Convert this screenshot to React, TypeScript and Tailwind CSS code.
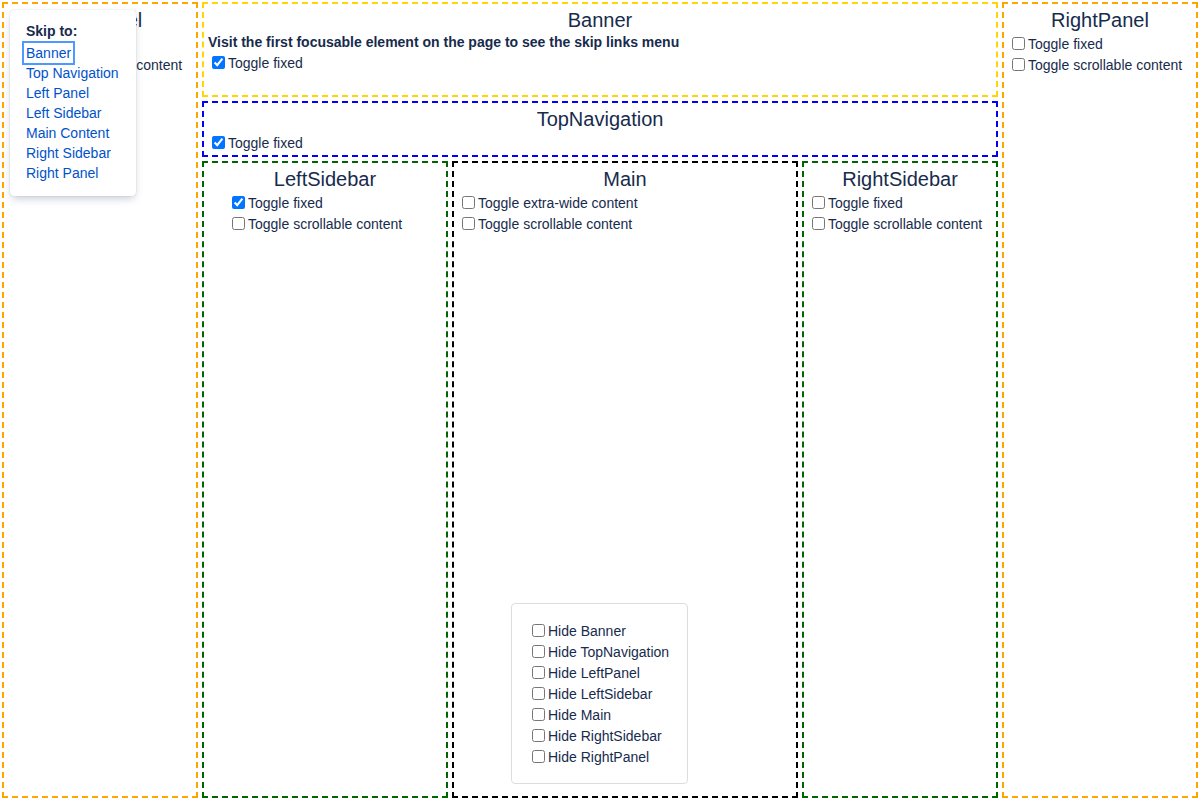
import React, { useState } from "react";

const font = { fontFamily: '"Liberation Sans", Arial, sans-serif' };

function Toggle({ label, checked, onChange }: { label: string; checked: boolean; onChange: () => void }) {
  return (
    <label className="flex items-center h-[21px] text-[14px] leading-[16px] text-[#172b4d]">
      <input
        type="checkbox"
        checked={checked}
        onChange={onChange}
        className="w-[13px] h-[13px] mt-[3px] mb-[3px] ml-[4px] mr-[3px] shrink-0"
      />
      <span>{label}</span>
    </label>
  );
}

function Title({ children }: { children: React.ReactNode }) {
  return <h3 className="text-center text-[20px] leading-[25px] text-[#172b4d]">{children}</h3>;
}

export default function App() {
  const [flags, setFlags] = useState<Record<string, boolean>>({
    bannerFixed: true,
    topFixed: true,
    leftSidebarFixed: true,
  });
  const flip = (k: string) => setFlags((f) => ({ ...f, [k]: !f[k] }));
  const hideKeys = ["Banner", "TopNavigation", "LeftPanel", "LeftSidebar", "Main", "RightSidebar", "RightPanel"];
  const skipLinks = ["Banner", "Top Navigation", "Left Panel", "Left Sidebar", "Main Content", "Right Sidebar", "Right Panel"];

  return (
    <div className="relative flex w-[1200px] h-[800px] bg-white overflow-hidden" style={font}>
      {/* left panel */}
      <div className="w-[196px] m-[2px] border-2 border-dashed border-[#ffa500] pt-[4px] px-[4px]">
        <Title>LeftPanel</Title>
        <Toggle label="Toggle fixed" checked={!!flags.leftPanelFixed} onChange={() => flip("leftPanelFixed")} />
        <Toggle label="Toggle scrollable content" checked={!!flags.leftPanelScroll} onChange={() => flip("leftPanelScroll")} />
      </div>

      {/* center column */}
      <div className="w-[800px] flex flex-col">
        <div className="h-[95px] m-[2px] border-2 border-dashed border-[#ffd700] pt-[4px] px-[4px]">
          <Title>Banner</Title>
          <p className="text-[14px] leading-[18px] font-bold text-[#172b4d]">
            Visit the first focusable element on the page to see the skip links menu
          </p>
          <div className="mt-[1px]">
            <Toggle label="Toggle fixed" checked={!!flags.bannerFixed} onChange={() => flip("bannerFixed")} />
          </div>
        </div>

        <div className="h-[56px] m-[2px] border-2 border-dashed border-[#0000ff] pt-[4px] px-[4px]">
          <Title>TopNavigation</Title>
          <Toggle label="Toggle fixed" checked={!!flags.topFixed} onChange={() => flip("topFixed")} />
        </div>

        <div className="flex-1 flex">
          <div className="w-[246px] m-[2px] border-2 border-dashed border-[#006400] pt-[4px] px-[4px]">
            <Title>LeftSidebar</Title>
            <div className="pl-[20px]">
              <Toggle label="Toggle fixed" checked={!!flags.leftSidebarFixed} onChange={() => flip("leftSidebarFixed")} />
              <Toggle label="Toggle scrollable content" checked={!!flags.leftSidebarScroll} onChange={() => flip("leftSidebarScroll")} />
            </div>
          </div>

          <div className="w-[346px] m-[2px] border-2 border-dashed border-black pt-[4px] px-[4px]">
            <Title>Main</Title>
            <Toggle label="Toggle extra-wide content" checked={!!flags.mainWide} onChange={() => flip("mainWide")} />
            <Toggle label="Toggle scrollable content" checked={!!flags.mainScroll} onChange={() => flip("mainScroll")} />
          </div>

          <div className="w-[196px] m-[2px] border-2 border-dashed border-[#006400] pt-[4px] px-[4px]">
            <Title>RightSidebar</Title>
            <Toggle label="Toggle fixed" checked={!!flags.rightSidebarFixed} onChange={() => flip("rightSidebarFixed")} />
            <Toggle label="Toggle scrollable content" checked={!!flags.rightSidebarScroll} onChange={() => flip("rightSidebarScroll")} />
          </div>
        </div>
      </div>

      {/* right panel */}
      <div className="w-[196px] m-[2px] border-2 border-dashed border-[#ffa500] pt-[4px] px-[4px]">
        <Title>RightPanel</Title>
        <Toggle label="Toggle fixed" checked={!!flags.rightPanelFixed} onChange={() => flip("rightPanelFixed")} />
        <Toggle label="Toggle scrollable content" checked={!!flags.rightPanelScroll} onChange={() => flip("rightPanelScroll")} />
      </div>

      {/* skip links menu */}
      <div className="absolute left-[10px] top-[10px] w-[126px] bg-white rounded-[4px] pt-[11px] pb-[13px] pl-[14px] pr-[14px] shadow-[0_4px_8px_-2px_rgba(9,30,66,0.25),0_0_1px_rgba(9,30,66,0.31)]">
        <p className="pl-[2px] text-[14px] leading-[20px] font-bold text-[#172b4d] mb-[2px]">Skip to:</p>
        <ul>
          {skipLinks.map((l, i) => (
            <li key={l} className="flex h-[20px]">
              <a
                href="#"
                className={`block px-[2px] text-[14px] leading-[20px] text-[#0052cc] ${i === 0 ? "outline-2 outline-[#4c9aff]" : ""}`}
              >
                {l}
              </a>
            </li>
          ))}
        </ul>
      </div>

      {/* hide controls */}
      <div className="absolute left-[511px] bottom-[16px] w-[177px] bg-white border border-[#dddddd] rounded-[4px] p-[16px]">
        {hideKeys.map((k) => (
          <Toggle key={k} label={`Hide ${k}`} checked={!!flags["hide" + k]} onChange={() => flip("hide" + k)} />
        ))}
      </div>
    </div>
  );
}
